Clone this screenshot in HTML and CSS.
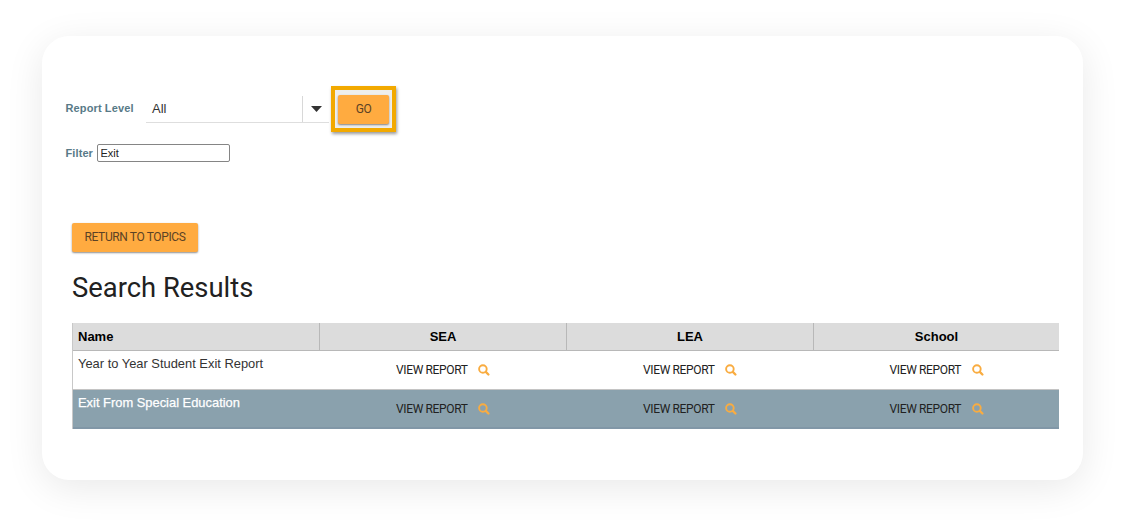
FILE: index.html
```html
<!DOCTYPE html>
<html lang="en">
<head>
<meta charset="utf-8">
<title>Search Results</title>
<link rel="stylesheet" href="styles.css">
</head>
<body>
<svg class="sprite" aria-hidden="true">
  <symbol id="search" viewBox="0 0 12 12">
    <circle cx="4.9" cy="5" r="3.8" fill="none" stroke="currentColor" stroke-width="1.9"/>
    <path d="M7.8 7.9 L10.4 10.5" fill="none" stroke="currentColor" stroke-width="2.3" stroke-linecap="round"/>
  </symbol>
</svg>
<main class="card">
  <div class="level-row">
    <span class="label level-label">Report Level</span>
    <div class="select">
      <span class="select-value">All</span>
      <span class="select-toggle"><svg class="caret" viewBox="0 0 11 6"><path d="M0 0H11L5.5 6Z" fill="currentColor"/></svg></span>
    </div>
    <div class="highlight"><button class="btn go">GO</button></div>
  </div>
  <div class="filter-row">
    <label class="label filter-label" for="filter">Filter</label>
    <input class="filter-input" id="filter" type="text" value="Exit">
  </div>
  <section class="results">
    <button class="btn return">RETURN TO TOPICS</button>
    <h1 class="title">Search Results</h1>
    <div class="table">
      <div class="row head">
        <div class="cell name">Name</div>
        <div class="cell">SEA</div>
        <div class="cell">LEA</div>
        <div class="cell">School</div>
      </div>
      <div class="row">
        <div class="name"><span class="report-name">Year to Year Student Exit Report</span></div>
        <div class="view"><span class="view-text">VIEW REPORT</span><svg class="icon"><use href="#search"/></svg></div>
        <div class="view"><span class="view-text">VIEW REPORT</span><svg class="icon"><use href="#search"/></svg></div>
        <div class="view"><span class="view-text">VIEW REPORT</span><svg class="icon"><use href="#search"/></svg></div>
      </div>
      <div class="row selected">
        <div class="name"><span class="report-name">Exit From Special Education</span></div>
        <div class="view"><span class="view-text">VIEW REPORT</span><svg class="icon"><use href="#search"/></svg></div>
        <div class="view"><span class="view-text">VIEW REPORT</span><svg class="icon"><use href="#search"/></svg></div>
        <div class="view"><span class="view-text">VIEW REPORT</span><svg class="icon"><use href="#search"/></svg></div>
      </div>
    </div>
  </section>
</main>
</body>
</html>
```
FILE: styles.css
```css
* { box-sizing: border-box; }
body {
  margin: 0;
  padding: 36px 42px 48px;
  height: 528px;
  overflow: hidden;
  background: #fff;
  font-family: "Liberation Sans", Arial, sans-serif;
}
.sprite { display: none; }
.card {
  height: 444px;
  padding: 50px 24px 0 23.5px;
  border-radius: 27px;
  background: #fff;
  box-shadow: 0 8px 38px rgba(0, 0, 0, 0.09);
}
.level-row { display: flex; align-items: center; height: 46px; }
.label { color: #587a87; font-size: 11px; font-weight: bold; white-space: nowrap; }
.level-label { width: 80.5px; padding-bottom: 2px; letter-spacing: 0.12px; }
.select {
  display: flex;
  width: 183px;
  height: 27px;
  border-bottom: 1px solid #dedede;
  color: #333;
}
.select-value { width: 156px; padding-left: 6px; font-size: 13px; line-height: 26px; }
.select-toggle {
  display: flex;
  flex: 1;
  align-items: center;
  padding-left: 8px;
  border-left: 1px solid #d8d8d8;
}
.caret { width: 11px; height: 6px; }
.highlight {
  width: 65px;
  height: 46px;
  margin-left: 2px;
  padding: 5px 3px 3px;
  border: 4px solid #f2a900;
  background: #eeeeec;
  box-shadow: 1px 2px 3px rgba(0, 0, 0, 0.4);
}
.btn {
  display: block;
  height: 29px;
  padding: 0;
  border: 0;
  border-radius: 2px;
  background: #ffab40;
  color: #5b4225;
  font: 12px/29px Roboto, sans-serif;
  letter-spacing: -0.38px;
  box-shadow: 0 1px 2px rgba(0, 0, 0, 0.45);
}
.go { width: 51px; }
.filter-row { display: flex; align-items: center; height: 18px; margin-top: 12px; }
.filter-label { width: 31px; letter-spacing: 0.1px; }
.filter-input {
  width: 133px;
  height: 18px;
  padding: 0 3px;
  border: 1px solid #858585;
  border-radius: 2px;
  background: #fff;
  color: #222;
  font: 11px "Liberation Sans", Arial, sans-serif;
}
.results { width: 987px; margin: 61px 0 0 6.5px; }
.return { width: 126px; }
.title {
  margin: 18px 0 0;
  color: #212121;
  font: 400 27.4px/36px Roboto, sans-serif;
}
.table { margin-top: 17px; border-left: 1px solid #c8c8c8; }
.row { display: grid; grid-template-columns: 246px 247px 247px 1fr; height: 39px; border-bottom: 1px solid #c4c4c4; }
.head {
  height: 28px;
  border-bottom-color: #b8b8b8;
  background: #dcdcdc;
  color: #000;
  font-size: 13px;
  font-weight: bold;
}
.cell { border-left: 1px solid #b8b8b8; line-height: 27px; text-align: center; }
.cell:first-child { border-left: 0; }
.row .name { padding-left: 5px; text-align: left; }
.report-name { display: block; margin-top: 4px; color: #333; font-size: 12.9px; line-height: 18px; }
.selected { background: #8aa1ad; border-bottom: 2px solid #8197a7; }
.selected .report-name { color: #fff; -webkit-text-stroke: 0.25px #fff; }
.view {
  display: flex;
  align-items: center;
  justify-content: center;
  gap: 10.5px;
  padding-left: 1px;
  color: #212121;
  font: 12px Roboto, sans-serif;
}
.view-text { letter-spacing: -0.36px; }
.icon { width: 12px; height: 12px; color: #f9ac40; }
```
